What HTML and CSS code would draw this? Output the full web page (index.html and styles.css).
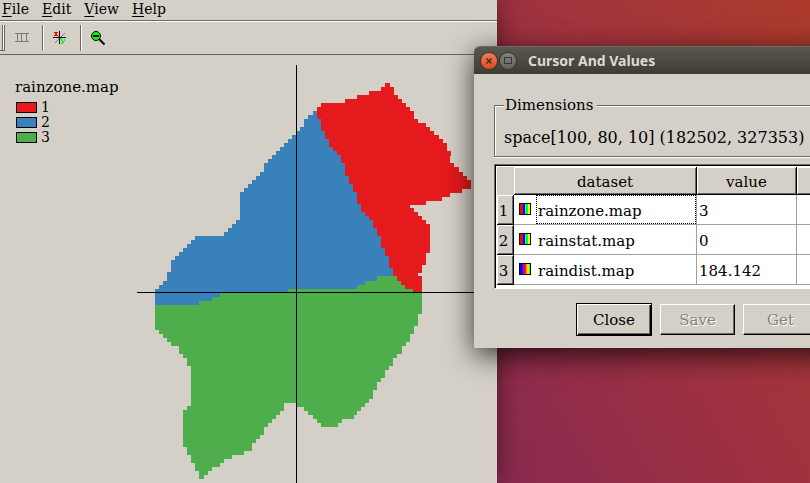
FILE: index.html
```html
<!DOCTYPE html>
<html lang="en">
<head>
<meta charset="utf-8">
<title>rainzone.map</title>
<link rel="stylesheet" href="styles.css">
</head>
<body>
<div class="desktop">
  <main class="viewer">
    <nav class="menubar">
      <a href="#"><u>F</u>ile</a>
      <a href="#"><u>E</u>dit</a>
      <a href="#"><u>V</u>iew</a>
      <a href="#"><u>H</u>elp</a>
    </nav>
    <div class="toolbar">
      <span class="grip"></span>
      <button class="tool" aria-label="Animate" disabled>
        <svg width="16" height="16" shape-rendering="crispEdges" fill="#7b7975"><path d="M1 3h14v1H1zM1 11h14v1H1zM3 3h1v9H3zM7 3h1v9H7zM12 3h1v9h-1z"/></svg>
      </button>
      <span class="separator"></span>
      <button class="tool" aria-label="Cursor and values">
        <svg width="16" height="16" fill="none" shape-rendering="crispEdges"><path d="M3 13 13 3M4 4 12 12" stroke="#777"/><path d="M1 7h13v1H1zM7 1h1v13H7z" fill="#000"/><path d="M2 2h4v1h-1v2h1v1H2v-1h1v-2H2z" fill="#f00"/><path d="M9 9h2v2h1v-2h1v2h-1v2h-1v1H9v-1h1v-2H9z" fill="#0f0"/></svg>
      </button>
      <span class="separator"></span>
      <button class="tool" aria-label="Zoom out">
        <svg width="16" height="16"><path d="M9 9 14.500 14.500" stroke="#000" stroke-width="2"/><circle cx="6" cy="6" r="4.500" fill="#0f0" stroke="#000"/><path d="M3 6H9" stroke="#000" stroke-width="2"/></svg>
      </button>
    </div>
    <section class="map-pane">
      <div class="legend">
        <h1>rainzone.map</h1>
        <ul>
          <li><span class="swatch zone-1"></span>1</li>
          <li><span class="swatch zone-2"></span>2</li>
          <li><span class="swatch zone-3"></span>3</li>
        </ul>
      </div>
      <svg class="map" viewBox="137 65 360 418" preserveAspectRatio="xMinYMin meet" shape-rendering="crispEdges" role="img" aria-label="Rain zones">
        <path fill="#3881ba" d="M155 310V289H159V285H163V281H167V272H171V260H175V256H179V252H183V248H187V244H191V240H195V236H224V232H228V228H232V224H236V220H240V192H244V188H248V184H252V180H256V176H260V172H264V163H268V159H272V155H276V151H280V147H284V143H288V139H292V135H296V131H300V127H304V119H308V115H313V111H317V107H400V310Z"/>
        <path fill="#e41a1c" d="M317 107H321V103H345V99H357V95H369V91H381V87H385V83H390V87H394V95H398V99H402V103H406V107H410V111H414V119H418V123H426V127H430V131H434V135H439V139H443V143H447V151H451V156H450V163H454V167H459V172H463V176H467V180H471V189H462V193H450V197H442V201H426V205H410V208H414V212H418V216H422V220H426V224H430V253H426V265H422V273H418V276H422V294H393V268H389V256H385V248H381V236H377V228H373V220H369V216H365V212H361V204H357V192H353V184H349V176H345V163H341V155H337V151H333V147H329V139H325V131H321V119H317Z"/>
        <path fill="#4eae4b" d="M155 305H199V301H212V297H220V293H288V289H357V285H365V281H377V276H397V281H401V285H405V289H413V292H422V314H418V326H414V334H410V342H406V346H402V354H397V358H393V366H389V370H385V378H381V382H377V390H373V399H369V403H365V407H361V411H357V415H354V419H342V423H338V427H321V423H317V419H313V415H308V411H304V407H297V403H284V411H280V415H276V419H272V423H268V427H264V435H260V439H256V443H252V451H244V455H232V459H224V463H220V467H212V471H208V475H204V479H199V471H195V463H191V455H187V447H183V410H187V406H191V366H187V358H183V354H179V346H171V342H167V338H163V334H159V330H155Z"/>
        <path fill="none" stroke="#000" d="M296.500 65V483M137 292.500H497"/>
      </svg>
    </section>
  </main>

  <section class="dialog" role="dialog" aria-labelledby="dialog-title">
    <header class="titlebar">
      <button class="window-button close" aria-label="Close window"><svg width="16" height="16" fill="none" stroke="#4a2a1c" stroke-width="1.500"><path d="M5.500 5.500 10.500 10.500M10.500 5.500 5.500 10.500"/></svg></button>
      <button class="window-button maximize" aria-label="Maximize"><svg width="16" height="16" fill="none" stroke="#34332e"><path d="M4.500 4.500H11.500V10.500H4.500Z"/></svg></button>
      <h2 id="dialog-title">Cursor And Values</h2>
    </header>
    <div class="dialog-body">
      <fieldset class="dimensions">
        <legend>Dimensions</legend>
        <p>space[100, 80, 10] (182502, 327353)</p>
      </fieldset>
      <div class="table-frame">
        <table>
          <colgroup><col class="col-index"><col class="col-dataset"><col class="col-value"><col></colgroup>
          <thead><tr><td class="corner"></td><th scope="col">dataset</th><th scope="col">value</th><th scope="col"></th></tr></thead>
          <tbody>
            <tr><th scope="row">1</th><td class="dataset"><div class="cell"><span class="palette nominal"></span><span class="name focused">rainzone.map</span></div></td><td>3</td><td></td></tr>
            <tr><th scope="row">2</th><td class="dataset"><div class="cell"><span class="palette nominal"></span><span class="name">rainstat.map</span></div></td><td>0</td><td></td></tr>
            <tr><th scope="row">3</th><td class="dataset"><div class="cell"><span class="palette scalar"></span><span class="name">raindist.map</span></div></td><td>184.142</td><td></td></tr>
          </tbody>
        </table>
      </div>
      <div class="actions">
        <button class="action default">Close</button>
        <button class="action" disabled>Save</button>
        <button class="action" disabled>Get</button>
      </div>
    </div>
  </section>
</div>
</body>
</html>
```
FILE: styles.css
```css
:root {
  --face: #d4d0c8;
  --shade: #6a6864;
  --light: #fff;
}

* {
  box-sizing: border-box;
}

body {
  margin: 0;
  overflow: hidden;
  font: 15px/18px "DejaVu Serif", serif;
  color: #000;
}

h1,
h2,
p,
ul {
  margin: 0;
  padding: 0;
  font-weight: normal;
}

button {
  font: inherit;
  padding: 0;
}

.desktop {
  position: relative;
  display: grid;
  grid-template-columns: 497fr 313fr;
  height: 100vh;
  overflow: hidden;
  background: linear-gradient(60deg, #8a2a50 46%, #9d3141 70%, #a33539 82%, #ab3a2a);
}

.viewer {
  display: flex;
  flex-direction: column;
  min-width: 0;
  min-height: 0;
  background: var(--face);
  box-shadow: 0 0 24px rgba(0, 0, 0, 0.5);
}

.menubar {
  display: flex;
  gap: 13px;
  height: 21px;
  padding-left: 2px;
  border-bottom: 1px solid var(--shade);
  font-size: 14px;
}

.menubar a {
  color: inherit;
  text-decoration: none;
}

.menubar u {
  text-underline-offset: 2px;
}

.toolbar {
  display: flex;
  align-items: center;
  height: 34px;
  border-top: 1px solid var(--light);
  border-bottom: 1px solid var(--shade);
}

.grip {
  width: 5px;
  height: 26px;
  margin-right: 1px;
  border: solid var(--shade);
  border-width: 0 1px 1px 0;
  box-shadow: inset -1px 0 var(--light), inset -2px 0 var(--shade);
}

.tool {
  display: grid;
  place-items: center;
  width: 36px;
  height: 26px;
  padding-right: 4px;
  border: 0;
  background: none;
}

.separator {
  width: 2px;
  height: 26px;
  border-left: 1px solid var(--shade);
  border-right: 1px solid var(--light);
}

.map-pane {
  display: flex;
  flex: 1;
  align-items: flex-start;
  min-height: 0;
  padding-top: 10px;
  overflow: hidden;
}

.legend {
  flex: 0 0 137px;
  padding: 13px 0 0 15px;
}

.legend h1 {
  font-size: 15px;
  line-height: 18px;
}

.legend ul {
  padding: 4px 0 0 1px;
  list-style: none;
}

.legend li {
  display: flex;
  align-items: center;
  gap: 4px;
  height: 15px;
  font-size: 14px;
  line-height: 15px;
}

.swatch {
  width: 21px;
  height: 11px;
  border: 1px solid #000;
}

.zone-1 { background: #e41a1c; }
.zone-2 { background: #3881ba; }
.zone-3 { background: #4eae4b; }

.map {
  flex: 1;
  min-width: 0;
}

.dialog {
  position: absolute;
  top: 46px;
  left: 474px;
  right: -60px;
  border-radius: 6px 6px 0 0;
  background: var(--face);
  box-shadow: 0 7px 28px rgba(0, 0, 0, 0.75);
}

.titlebar {
  display: flex;
  align-items: center;
  gap: 3px;
  height: 28px;
  padding-left: 7px;
  border-radius: 6px 6px 0 0;
  border-top: 1px solid #6b6a63;
  background: linear-gradient(#59574f, #3d3c37);
}

.titlebar h2 {
  padding-left: 9px;
  font: bold 14px/18px "Noto Sans", sans-serif;
  color: #dfdbd2;
}

.window-button {
  display: grid;
  width: 16px;
  height: 16px;
  border: 0;
  border-radius: 50%;
}

.close {
  background: linear-gradient(#f47b55, #df4a1a);
  box-shadow: 0 0 0 1px #35342f;
}

.maximize {
  background: linear-gradient(#85837b, #63625b);
  box-shadow: 0 0 0 1px #35342f;
}

.dialog-body {
  padding: 22px 20px 12px;
}

.dimensions {
  height: 61px;
  margin: 0 0 7px;
  padding: 15px 9px 0;
  border: 1px solid var(--shade);
  box-shadow: inset 1px 1px var(--light), 0 1px var(--light);
}

.dimensions legend {
  padding: 0 4px 0 1px;
  background: var(--face);
}

.dimensions p {
  font-size: 16px;
  white-space: nowrap;
}

.table-frame {
  border: 1px solid var(--shade);
  border-bottom-color: var(--light);
  box-shadow: inset 1px 1px #000;
  padding: 2px 0 0 2px;
  height: 125px;
  background: var(--light);
}

table {
  width: 100%;
  table-layout: fixed;
  border-collapse: separate;
  border-spacing: 0;
}

.col-index { width: 17px; }
.col-dataset { width: 183px; }
.col-value { width: 100px; }

th,
td {
  height: 30px;
  padding: 2px 0 0;
  font-weight: normal;
}

td {
  padding-left: 2px;
  border-right: 1px solid #a0a0a0;
  border-bottom: 1px solid #a0a0a0;
}

thead th,
thead td {
  height: 28px;
}

tbody th {
  padding-right: 3px;
}

th {
  background: var(--face);
  border-right: 1px solid #000;
  border-bottom: 1px solid #000;
  box-shadow: inset 1px 1px var(--light), inset -1px -1px var(--shade);
}

.corner {
  border: 0;
  background: var(--face);
}

.dataset {
  padding: 0 0 0 5px;
}

.cell {
  display: flex;
  gap: 5px;
  height: 29px;
}

.palette {
  width: 12px;
  height: 12px;
  margin-top: 8px;
  border: 1px solid #000;
}

.nominal {
  background: linear-gradient(90deg, #f00 30%, #00f 30% 50%, #0ff 50% 65%, #0f0 65% 80%, #ff0 80%);
}

.scalar {
  background: linear-gradient(90deg, #00f 20%, #a0f 30%, #f00 50%, #f80 65%, #ff0 80%, #0f0);
}

.name {
  flex: 1;
  padding: 6px 1px 0;
  border: 1px dotted transparent;
}

.focused {
  border-color: #000;
}

.actions {
  display: flex;
  align-items: center;
  gap: 8px;
  padding: 14px 0 0 82px;
}

.action {
  flex: none;
  width: 75px;
  height: 31px;
  border: 1px solid;
  border-color: var(--light) #000 #000 var(--light);
  background: var(--face);
  box-shadow: inset -1px -1px var(--shade);
}

.action:disabled {
  color: #85827d;
  text-shadow: 1px 1px var(--light);
}

.default {
  width: 76px;
  height: 33px;
  border: 1px solid #000;
  box-shadow: inset 1px 1px var(--light), inset -1px -1px #000, inset -2px -2px var(--shade);
}
```
